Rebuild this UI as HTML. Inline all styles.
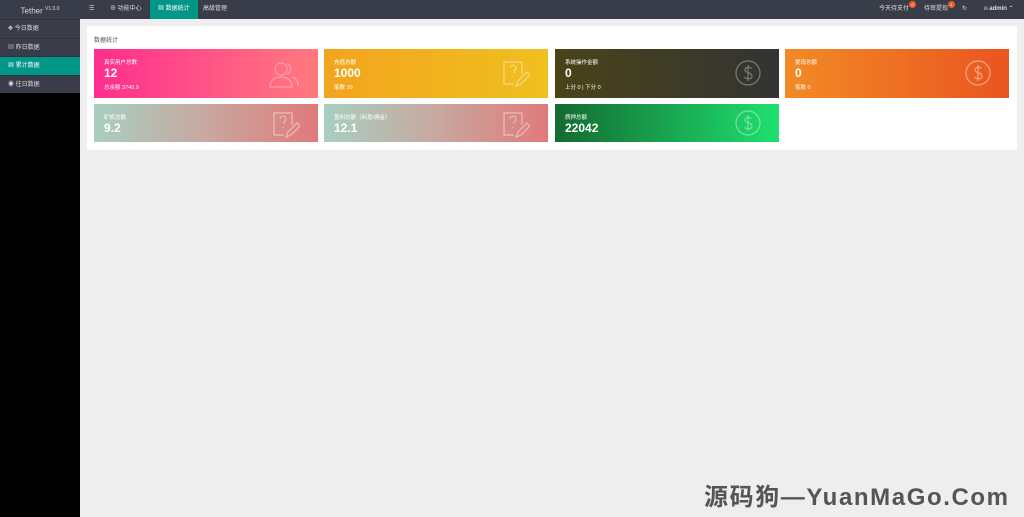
<!DOCTYPE html>
<html><head><meta charset="utf-8"><style>
*{margin:0;padding:0;box-sizing:border-box}
body{width:1024px;height:517px;overflow:hidden;background:#eee;font-family:"Liberation Sans","Noto Sans CJK SC",sans-serif;position:relative}
.side{position:absolute;left:0;top:0;width:80px;height:517px;background:#000}
.logo{height:19px;background:#393D49;color:#ddd;font-size:8px;text-align:center;line-height:19px}
.logo sup{font-size:5px}
.si{height:18.5px;line-height:18.5px;font-size:6px;color:#ddd;padding-left:8px;background:#393D49;border-top:1px solid #2f323c}
.si.on{background:#009688;color:#fff}
.top{position:absolute;left:80px;top:0;width:944px;height:19px;background:#393D49;font-size:6px;color:#ddd}
.top span{position:absolute;top:0;line-height:19px}
.act{background:#009688;color:#fff;padding:0 8px;left:70px}
.badge{position:absolute;top:1px;width:7px;height:7px;border-radius:50%;background:#f45b24;color:#fff;font-size:4px;text-align:center;line-height:7px}
.panel{position:absolute;left:87px;top:26px;width:930px;height:124px;background:#fff}
.tt{position:absolute;left:7px;top:9px;font-size:6px;color:#555}
.c{position:absolute;width:224px;color:#fff}
.c .l{position:absolute;left:10px;top:9px;font-size:5.5px}
.c .n{position:absolute;left:10px;top:17px;font-size:12px;font-weight:bold}
.c .s{position:absolute;left:10px;top:34px;font-size:5.5px}
.c svg{position:absolute;right:18px;top:11px}
.wm{position:absolute;left:704px;top:477px;font-size:24px;font-weight:bold;color:#555;letter-spacing:1.6px;white-space:nowrap;font-family:"Liberation Sans","Noto Sans CJK SC",sans-serif}
</style></head><body>
<div class="side">
<div class="logo">Tether <sup>V1.0.0</sup></div>
<div class="si">✥ 今日数据</div>
<div class="si">▤ 昨日数据</div>
<div class="si on">▦ 累计数据</div>
<div class="si">◉ 往日数据</div>
</div>
<div class="top">
<span style="left:9px">☰</span>
<span style="left:30px">⊕ 功能中心</span>
<span class="act">▦ 数据统计</span>
<span style="left:123px">高级管理</span>
<span style="left:799px">今天待支付</span><i class="badge" style="left:829px">0</i>
<span style="left:844px">待审提现</span><i class="badge" style="left:868px">1</i>
<span style="left:882px">↻</span>
<span style="left:904px">⍝ <b>admin</b> ⌃</span>
</div>
<div class="panel">
<div class="tt">数据统计</div>
</div>
<div class="c" style="left:94px;top:49px;height:49px;background:linear-gradient(90deg,#ff2d8f,#ff7a7e)"><div class="l">真实用户总数</div><div class="n">12</div><div class="s">总余额 3740.9</div>
<svg width="32" height="28" viewBox="0 0 32 28" fill="none" stroke="rgba(255,255,255,.35)" stroke-width="1.2"><circle cx="13" cy="9" r="6"/><path d="M2 27c0-7 5-10 11-10s11 3 11 10z"/><path d="M19 3.5a6 6 0 0 1 0 11M24 17c4 1 6 4 6 9"/></svg></div>
<div class="c" style="left:324px;top:49px;height:49px;background:linear-gradient(90deg,#f2a41e,#f0c01e)"><div class="l">充值总额</div><div class="n">1000</div><div class="s">笔数 10</div>
<svg width="28" height="28" viewBox="0 0 28 28" fill="none" stroke="rgba(255,255,255,.45)" stroke-width="1.2"><path d="M20 14V2H2v22h10"/><path d="M8 8a3 3 0 1 1 4 3v2M11 16v1"/><path d="M14 26l2-5 9-9 3 3-9 9z"/></svg></div>
<div class="c" style="left:555px;top:49px;height:49px;background:linear-gradient(90deg,#4a4418,#333)"><div class="l">系统操作金额</div><div class="n">0</div><div class="s">上分 0 | 下分 0</div>
<svg width="26" height="26" viewBox="0 0 26 26" fill="none" stroke="rgba(255,255,255,.35)" stroke-width="1.2"><circle cx="13" cy="13" r="12"/><path d="M16.5 8.5c-1-1.5-6.5-2-6.5 1.5s7 2 7 6-6 3-7.5 1M13 5v16"/></svg></div>
<div class="c" style="left:785px;top:49px;height:49px;background:linear-gradient(90deg,#f28a25,#ea5520)"><div class="l">提现总额</div><div class="n">0</div><div class="s">笔数 0</div>
<svg width="26" height="26" viewBox="0 0 26 26" fill="none" stroke="rgba(255,255,255,.45)" stroke-width="1.2"><circle cx="13" cy="13" r="12"/><path d="M16.5 8.5c-1-1.5-6.5-2-6.5 1.5s7 2 7 6-6 3-7.5 1M13 5v16"/></svg></div>
<div class="c" style="left:94px;top:104px;height:38px;background:linear-gradient(90deg,#a8cfc0,#c8a8a0 50%,#e07a7a)"><div class="l">矿机总额</div><div class="n">9.2</div>
<svg style="top:7px" width="28" height="28" viewBox="0 0 28 28" fill="none" stroke="rgba(255,255,255,.45)" stroke-width="1.2"><path d="M20 14V2H2v22h10"/><path d="M8 8a3 3 0 1 1 4 3v2M11 16v1"/><path d="M14 26l2-5 9-9 3 3-9 9z"/></svg></div>
<div class="c" style="left:324px;top:104px;height:38px;background:linear-gradient(90deg,#a8cfc0,#c8a8a0 50%,#e07a7a)"><div class="l">盈利总额（利息/佣金）</div><div class="n">12.1</div>
<svg style="top:7px" width="28" height="28" viewBox="0 0 28 28" fill="none" stroke="rgba(255,255,255,.45)" stroke-width="1.2"><path d="M20 14V2H2v22h10"/><path d="M8 8a3 3 0 1 1 4 3v2M11 16v1"/><path d="M14 26l2-5 9-9 3 3-9 9z"/></svg></div>
<div class="c" style="left:555px;top:104px;height:38px;background:linear-gradient(90deg,#146a30,#1ee070)"><div class="l">质押总额</div><div class="n">22042</div>
<svg style="top:6px" width="26" height="26" viewBox="0 0 26 26" fill="none" stroke="rgba(255,255,255,.4)" stroke-width="1.2"><circle cx="13" cy="13" r="12"/><path d="M16.5 8.5c-1-1.5-6.5-2-6.5 1.5s7 2 7 6-6 3-7.5 1M13 5v16"/></svg></div>
<div class="wm">源码狗—YuanMaGo.Com</div>
</body></html>
